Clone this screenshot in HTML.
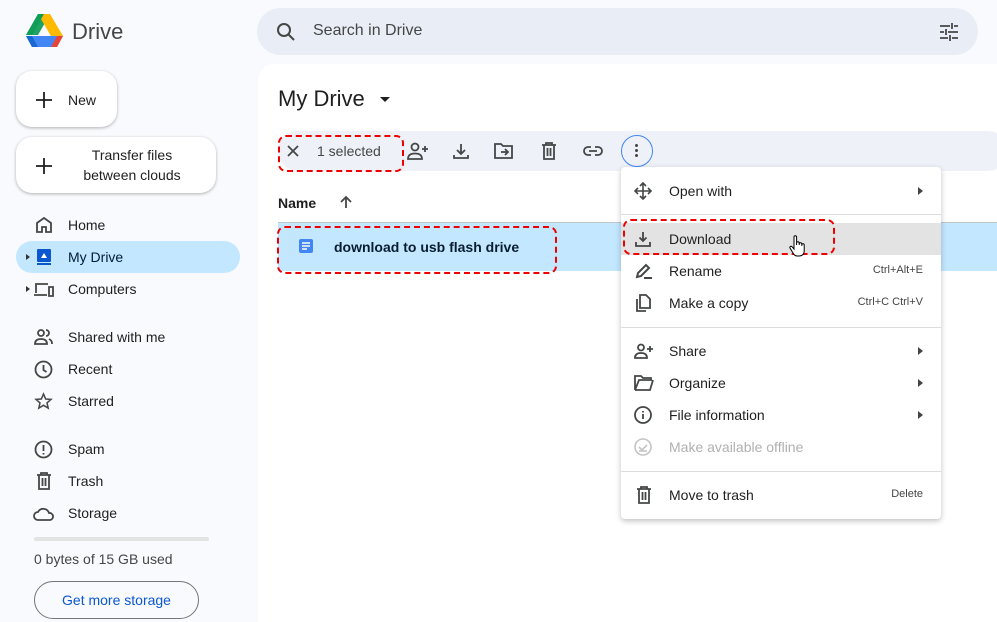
<!DOCTYPE html>
<html><head><style>
*{margin:0;padding:0;box-sizing:border-box}
html,body{width:997px;height:622px;overflow:hidden}
body{background:#f8fafd;font-family:"Liberation Sans",Arial,sans-serif;color:#1f1f1f;position:relative}
.a{position:absolute}
.t{font-size:14px}
svg{display:block}
.ic{position:absolute;fill:none;stroke:#444746;stroke-width:1.8}
.dash{position:absolute;border:2.5px dashed #e00;border-radius:8px}
.mi{position:absolute;left:0;width:320px;height:32px;font-size:14px}
.mi span.l{position:absolute;left:48px;top:8px}
.mi span.r{position:absolute;right:18px;top:9px;font-size:11px;color:#444}
.arr{position:absolute;right:18px;top:12px;width:0;height:0;border-left:5px solid #444;border-top:4.5px solid transparent;border-bottom:4.5px solid transparent}
</style></head><body>
<svg class="a" style="left:26px;top:14px" width="37" height="33" viewBox="0 0 37 33">
<polygon points="12,0 24,0 12,21 6,21 0,21" fill="#1ea362"/>
<polygon points="12,0 24,0 37,22 25,22" fill="#ffba00"/>
<polygon points="0,22 37,22 31,33 6,33" fill="#4285f4"/>
<polygon points="0,22 6,22 12,33 6,33" fill="#1967d2"/>
<polygon points="31,22 37,22 31,33 25,33" fill="#ea4335"/>
<polygon points="12,0 0,21 6,21 18,0" fill="#0f9d58"/>
</svg>
<div class="a" style="left:72px;top:19px;font-size:22px;color:#444746">Drive</div>
<div class="a" style="left:257px;top:8px;width:721px;height:47px;background:#e9eef6;border-radius:24px"></div>
<svg class="ic" style="left:276px;top:22px" width="20" height="20" viewBox="0 0 20 20"><circle cx="8" cy="8" r="6" stroke-width="2"/><line x1="12.5" y1="12.5" x2="18" y2="18" stroke-width="2"/></svg>
<div class="a" style="left:313px;top:22px;font-size:16px;color:#444746">Search in Drive</div>
<svg class="ic" style="left:938px;top:21px" width="22" height="22" viewBox="0 0 22 22"><path d="M2 5h10M16 5h4M14 2v6M2 11h4M10 11h10M8 8v6M2 17h8M14 17h6M12 14v6"/></svg>
<div class="a" style="left:16px;top:71px;width:101px;height:56px;background:#fff;border-radius:16px;box-shadow:0 1px 3px rgba(0,0,0,.3)"></div>
<svg class="ic" style="left:35px;top:91px" width="18" height="18" viewBox="0 0 18 18"><path d="M9 1v16M1 9h16" stroke="#1f1f1f" stroke-width="1.8"/></svg>
<div class="a t" style="left:68px;top:92px">New</div>
<div class="a" style="left:16px;top:137px;width:200px;height:56px;background:#fff;border-radius:16px;box-shadow:0 1px 3px rgba(0,0,0,.3)"></div>
<svg class="ic" style="left:35px;top:157px" width="18" height="18" viewBox="0 0 18 18"><path d="M9 1v16M1 9h16" stroke="#1f1f1f" stroke-width="1.8"/></svg>
<div class="a t" style="left:70px;top:145px;width:124px;text-align:center;line-height:20px">Transfer files between clouds</div>
<div class="a" style="left:16px;top:241px;width:224px;height:32px;background:#c2e7ff;border-radius:16px"></div>
<div class="a" style="left:26px;top:254px;border-left:4px solid #333;border-top:3px solid transparent;border-bottom:3px solid transparent"></div>
<div class="a" style="left:26px;top:286px;border-left:4px solid #333;border-top:3px solid transparent;border-bottom:3px solid transparent"></div>
<svg class="ic" style="left:35px;top:216px" width="18" height="18" viewBox="0 0 18 18"><path d="M2 16V7l7-5 7 5v9H11v-5H7v5z"/></svg>
<svg class="a" style="left:35px;top:248px" width="18" height="18" viewBox="0 0 18 18"><rect x="2" y="1" width="14" height="13" rx="1" fill="#0b57d0"/><rect x="2" y="15" width="14" height="2" fill="#0b57d0"/><path d="M6 10l3-5 3 5z" fill="#fff"/></svg>
<svg class="ic" style="left:33px;top:281px" width="22" height="18" viewBox="0 0 22 18"><path d="M3 12V3h12M1 14h13M16 6h4v9h-4z"/></svg>
<svg class="ic" style="left:34px;top:328px" width="20" height="18" viewBox="0 0 20 18"><circle cx="7" cy="5" r="3"/><path d="M1 16c0-4 3-5 6-5s6 1 6 5zM12 2a3 3 0 010 6M15 11c2 1 3 2 3 5"/></svg>
<svg class="ic" style="left:34px;top:360px" width="19" height="19" viewBox="0 0 19 19"><circle cx="9.5" cy="9.5" r="8"/><path d="M9.5 5v5l3 2"/></svg>
<svg class="ic" style="left:34px;top:392px" width="19" height="19" viewBox="0 0 19 19"><path d="M9.5 2l2.2 5 5.3.4-4 3.5 1.2 5.2-4.7-2.8-4.7 2.8 1.2-5.2-4-3.5 5.3-.4z" stroke-width="1.5"/></svg>
<svg class="ic" style="left:34px;top:440px" width="19" height="19" viewBox="0 0 19 19"><circle cx="9.5" cy="9.5" r="8"/><path d="M9.5 5v6M9.5 13v1.5"/></svg>
<svg class="ic" style="left:36px;top:472px" width="16" height="18" viewBox="0 0 16 18"><path d="M1 3h14M5 3V1h6v2M3 3v14h10V3M6.5 6v8M9.5 6v8"/></svg>
<svg class="ic" style="left:33px;top:506px" width="22" height="15" viewBox="0 0 22 15"><path d="M5 14a4 4 0 010-8 6 6 0 0111 1 3.5 3.5 0 011 7z"/></svg>
<div class="a t" style="left:68px;top:217px">Home</div>
<div class="a t" style="left:68px;top:249px;color:#001d35">My Drive</div>
<div class="a t" style="left:68px;top:281px">Computers</div>
<div class="a t" style="left:68px;top:329px">Shared with me</div>
<div class="a t" style="left:68px;top:361px">Recent</div>
<div class="a t" style="left:68px;top:393px">Starred</div>
<div class="a t" style="left:68px;top:441px">Spam</div>
<div class="a t" style="left:68px;top:473px">Trash</div>
<div class="a t" style="left:68px;top:505px">Storage</div>
<div class="a" style="left:34px;top:537px;width:175px;height:4px;background:#e3e3e3;border-radius:2px"></div>
<div class="a t" style="left:34px;top:551px;color:#444746">0 bytes of 15 GB used</div>
<div class="a" style="left:34px;top:581px;width:165px;height:38px;border:1px solid #747775;border-radius:19px;color:#0b57d0;font-size:14px;text-align:center;line-height:36px">Get more storage</div>
<div class="a" style="left:258px;top:64px;width:760px;height:558px;background:#fff;border-radius:16px 0 0 0"></div>
<div class="a" style="left:278px;top:86px;font-size:22px">My Drive</div>
<div class="a" style="left:380px;top:97px;border-top:5px solid #1f1f1f;border-left:5px solid transparent;border-right:5px solid transparent"></div>
<div class="a" style="left:278px;top:131px;width:730px;height:40px;background:#eef2f8;border-radius:20px"></div>
<svg class="ic" style="left:287px;top:145px" width="12" height="12" viewBox="0 0 12 12"><path d="M1 1l10 10M11 1L1 11"/></svg>
<div class="a t" style="left:317px;top:143px;color:#444746">1 selected</div>
<div class="dash" style="left:278px;top:135px;width:126px;height:37px"></div>
<svg class="ic" style="left:407px;top:142px" width="22" height="18" viewBox="0 0 22 18"><circle cx="8" cy="5" r="3.5"/><path d="M1 17c0-4 3-5.5 7-5.5s7 1.5 7 5.5zM18 4v6M15 7h6"/></svg>
<svg class="ic" style="left:452px;top:142px" width="18" height="18" viewBox="0 0 18 18"><path d="M9 2v10M5 8l4 4 4-4M2 13v3h14v-3"/></svg>
<svg class="ic" style="left:494px;top:142px" width="20" height="18" viewBox="0 0 20 18"><path d="M1 2h6l2 2h9v12H1zM7 10h7M11 7l3 3-3 3"/></svg>
<svg class="ic" style="left:541px;top:142px" width="16" height="18" viewBox="0 0 16 18"><path d="M1 3h14M5 3V1h6v2M3 3v14h10V3M6.5 6v8M9.5 6v8"/></svg>
<svg class="ic" style="left:583px;top:144px" width="20" height="14" viewBox="0 0 20 14"><path d="M8 3H5a4 4 0 000 8h3M12 3h3a4 4 0 010 8h-3M6 7h8"/></svg>
<div class="a" style="left:621px;top:135px;width:32px;height:32px;border:1px solid #4285f4;border-radius:50%"></div>
<div class="a" style="left:635px;top:144px;width:3px;height:3px;background:#444;border-radius:50%;box-shadow:0 5px 0 #444,0 10px 0 #444"></div>
<div class="a t" style="left:278px;top:195px;font-weight:bold;color:#1f1f1f">Name</div>
<svg class="ic" style="left:339px;top:195px" width="14" height="14" viewBox="0 0 14 14"><path d="M7 13V2M2 7l5-5 5 5"/></svg>
<div class="a" style="left:278px;top:222px;width:719px;height:1px;background:#c4c7c5"></div>
<div class="a" style="left:278px;top:223px;width:719px;height:48px;background:#c2e7ff"></div>
<svg class="a" style="left:298px;top:238px" width="16" height="16" viewBox="0 0 16 16"><rect x="1" y="1" width="14" height="14" rx="2" fill="#4285f4"/><path d="M4 5h8M4 8h8M4 11h5" stroke="#fff" stroke-width="1.5"/></svg>
<div class="a t" style="left:334px;top:239px;font-weight:bold;color:#0a1d30">download to usb flash drive</div>
<div class="dash" style="left:277px;top:226px;width:280px;height:48px"></div>
<div class="a" style="left:621px;top:167px;width:320px;height:352px;background:#fff;border-radius:4px;box-shadow:0 2px 6px rgba(0,0,0,.25)">
<div class="mi" style="top:8px"><span class="l">Open with</span><i class="arr"></i></div>
<div class="a" style="left:0;top:47px;width:320px;height:1px;background:#ddd"></div>
<div class="mi" style="top:56px;background:#e3e3e3"><span class="l">Download</span></div>
<div class="mi" style="top:88px"><span class="l">Rename</span><span class="r">Ctrl+Alt+E</span></div>
<div class="mi" style="top:120px"><span class="l">Make a copy</span><span class="r">Ctrl+C Ctrl+V</span></div>
<div class="a" style="left:0;top:160px;width:320px;height:1px;background:#ddd"></div>
<div class="mi" style="top:168px"><span class="l">Share</span><i class="arr"></i></div>
<div class="mi" style="top:200px"><span class="l">Organize</span><i class="arr"></i></div>
<div class="mi" style="top:232px"><span class="l">File information</span><i class="arr"></i></div>
<div class="mi" style="top:264px"><span class="l" style="color:#b0b0b0">Make available offline</span></div>
<div class="a" style="left:0;top:304px;width:320px;height:1px;background:#ddd"></div>
<div class="mi" style="top:312px"><span class="l">Move to trash</span><span class="r">Delete</span></div>
</div>
<svg class="ic" style="left:634px;top:182px" width="18" height="18" viewBox="0 0 18 18"><path d="M9 1v16M1 9h16M6 4l3-3 3 3M6 14l3 3 3-3M4 6L1 9l3 3M14 6l3 3-3 3" stroke-width="1.6"/></svg>
<svg class="ic" style="left:635px;top:231px" width="16" height="16" viewBox="0 0 16 16"><path d="M8 1v9M4.5 6.5L8 10l3.5-3.5M1 11v4h14v-4"/></svg>
<svg class="ic" style="left:635px;top:262px" width="18" height="18" viewBox="0 0 18 18"><path d="M2 15l1-4 8-8 3 3-8 8zM9 16h8" stroke-width="2"/></svg>
<svg class="ic" style="left:635px;top:294px" width="16" height="18" viewBox="0 0 16 18"><path d="M5 1h6l4 4v9H5zM2 5v12h9"/></svg>
<svg class="ic" style="left:634px;top:343px" width="20" height="16" viewBox="0 0 20 16"><circle cx="7" cy="4.5" r="3"/><path d="M1 15c0-4 3-5 6-5s6 1 6 5zM16 3v6M13 6h6"/></svg>
<svg class="ic" style="left:634px;top:375px" width="20" height="16" viewBox="0 0 20 16"><path d="M1 1h6l2 2h8v2H5L1 15zM1 15h15l3-10"/></svg>
<svg class="ic" style="left:634px;top:406px" width="18" height="18" viewBox="0 0 18 18"><circle cx="9" cy="9" r="8"/><path d="M9 8v5M9 5v1.5"/></svg>
<svg class="a" style="left:634px;top:438px" width="18" height="18" viewBox="0 0 18 18" fill="none" stroke="#c4c4c4" stroke-width="1.6"><circle cx="9" cy="9" r="8"/><path d="M5 9l3 3 5-5M5 13h8"/></svg>
<svg class="ic" style="left:636px;top:486px" width="16" height="18" viewBox="0 0 16 18"><path d="M1 3h14M5 3V1h6v2M3 3v14h10V3M6.5 6v8M9.5 6v8"/></svg>
<div class="dash" style="left:623px;top:219px;width:212px;height:36px"></div>
<svg class="a" style="left:789px;top:234px" width="16" height="24" viewBox="0 0 16 24"><path d="M5 13V3a1.3 1.3 0 012.6 0v8V9a1.3 1.3 0 012.6 0v2-1a1.3 1.3 0 012.6 0v2-1a1.2 1.2 0 012.4 0v6c0 3-2 5-5 5H8c-2 0-3-1-4-3l-3-5a1.2 1.2 0 012-1.3L5 15z" fill="#fff" stroke="#000" stroke-width="1"/></svg>
</body></html>
